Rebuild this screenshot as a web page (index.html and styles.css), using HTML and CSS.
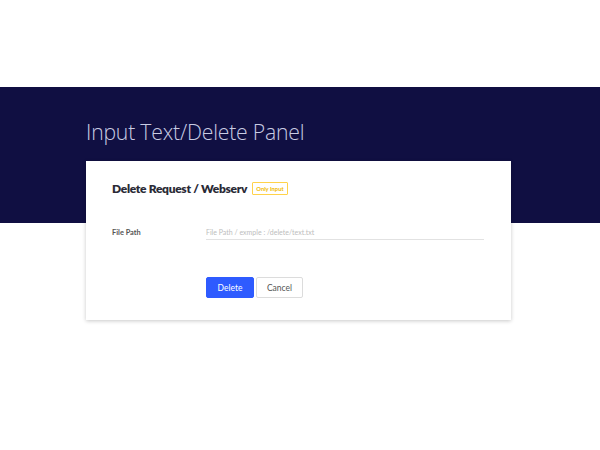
FILE: index.html
```html
<!DOCTYPE html>
<html>
<head>
<meta charset="utf-8">
<link rel="stylesheet" href="styles.css">
</head>
<body>
<div class="top-space"></div>
<div class="band">
  <div class="container">
    <h1 class="page-title">Input Text/Delete Panel</h1>
    <div class="card">
      <div class="card-head">
        <h2 class="card-title">Delete Request / Webserv</h2>
        <span class="badge">Only Input</span>
      </div>
      <div class="form-row">
        <label class="form-label">File Path</label>
        <input class="form-input" type="text" placeholder="File Path / exmple : /delete/text.txt">
      </div>
      <div class="actions">
        <button class="btn btn-primary">Delete</button>
        <button class="btn btn-default">Cancel</button>
      </div>
    </div>
  </div>
</div>
</body>
</html>
```
FILE: styles.css
```css
* { box-sizing: border-box; }
html, body { margin: 0; padding: 0; background: #fff; }
body { font-family: "Open Sans", "Noto Sans", sans-serif; width: 600px; height: 450px; overflow: hidden; }
.top-space { height: 87px; }
.band { background: linear-gradient(to bottom, #100f42 0, #100f42 136px, #fff 136px); }
.container { padding-left: 86px; width: 511px; }
.page-title {
  margin: 0;
  padding-top: 31px;
  height: 74px;
  font-weight: 300;
  font-size: 21.2px;
  line-height: 28px;
  color: #c9cce3;
  letter-spacing: -0.2px;
}
.card {
  background: #fff;
  height: 159px;
  width: 425px;
  box-shadow: 0 1px 4px rgba(0,0,0,0.22);
  padding: 19px 26px 0 26px;
}
.card-head { display: flex; align-items: center; gap: 5px; height: 16px; }
.card-title { margin: 0; font-family: "Lato", sans-serif; font-size: 12px; font-weight: 800; color: #2a2a36; letter-spacing: -0.3px; }
.badge {
  border: 1px solid #ffd24a;
  color: #f0b800;
  font-family: "Lato", sans-serif;
  font-size: 5.8px;
  font-weight: 700;
  padding: 2px 3px;
  line-height: 7px;
  border-radius: 1px;
}
.form-row { display: flex; align-items: flex-start; margin-top: 29px; }
.form-label { width: 94px; font-family: "Lato", sans-serif; font-size: 7.4px; font-weight: 700; color: #555; padding-top: 3px; }
.form-input {
  width: 278px;
  border: none;
  border-bottom: 1px solid #e2e2e2;
  font-family: "Lato", sans-serif;
  font-size: 7px;
  color: #999;
  padding: 3px 0 3px 0;
  outline: none;
  background: transparent;
}
.form-input::placeholder { color: #bdbdbd; }
.actions { display: flex; gap: 2px; margin-top: 37px; padding-left: 94px; }
.btn { font-family: "Lato", sans-serif; font-size: 8.5px; height: 21px; border-radius: 2px; cursor: pointer; }
.btn-primary { width: 48px; background: #2e5bff; color: #fff; border: 1px solid #2e5bff; }
.btn-default { width: 47px; background: #fff; color: #555; border: 1px solid #dcdcdc; }
```
